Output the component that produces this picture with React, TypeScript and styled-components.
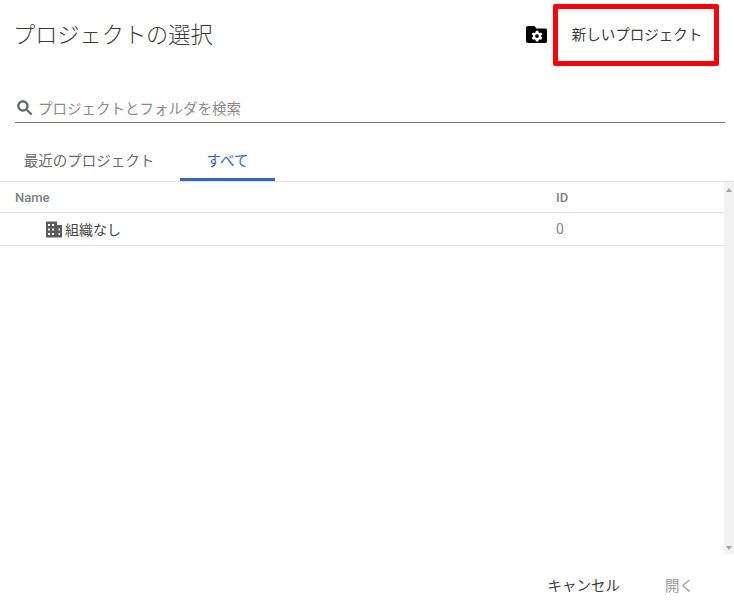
import React from "react";
import styled, { createGlobalStyle } from "styled-components";

const FONT = `Roboto, "Noto Sans CJK JP", "Liberation Sans", sans-serif`;

const Global = createGlobalStyle`
  html, body { margin: 0; padding: 0; background: #fff; }
  body { font-family: ${FONT}; overflow: hidden; }
`;

const Dialog = styled.div`
  width: 734px;
  height: 612px;
  display: flex;
  flex-direction: column;
  background: #fff;
  overflow: hidden;
`;

const Header = styled.header`
  height: 68px;
  padding: 4px 15px 2px 13px;
  box-sizing: border-box;
  display: flex;
  align-items: center;
`;

const Title = styled.h1`
  margin: 0;
  flex: 1;
  font-size: 22.2px;
  font-weight: 300;
  color: #3c3c3c;
  line-height: 30px;
`;

const FolderButton = styled.button`
  border: 0;
  padding: 0;
  background: none;
  width: 24px;
  height: 24px;
  margin: 0 4px 2px 0;
  display: flex;
`;

const HighlightedAction = styled.button`
  width: 166px;
  height: 62px;
  margin: 0 0 0 1px;
  border: 5px solid #fa0008;
  border-radius: 2px;
  box-sizing: border-box;
  background: #fff;
  font-family: inherit;
  font-size: 14.5px;
  font-weight: 400;
  color: #3a3a3a;
  padding: 0 0 4px 2px;
`;

const SearchField = styled.div`
  margin: 20px 9px 0 15px;
  height: 35px;
  box-sizing: border-box;
  border-bottom: 1px solid #757575;
  display: flex;
  align-items: center;
  gap: 3px;
  padding: 5px 0 0 0;
  font-size: 14.5px;
  color: #8a8a8a;
`;

const Tabs = styled.nav`
  margin-top: 20px;
  height: 39px;
  box-sizing: border-box;
  display: flex;
  border-bottom: 1px solid #e0e0e0;
`;

const Tab = styled.div<{ $active?: boolean; $width: number }>`
  width: ${(p) => p.$width}px;
  height: 38px;
  box-sizing: border-box;
  display: flex;
  align-items: center;
  justify-content: center;
  padding: 0 ${(p) => (p.$active ? 0 : 2)}px 3px 0;
  font-size: 14.5px;
  color: ${(p) => (p.$active ? "#3367b0" : "#6b6b6b")};
  border-bottom: 3px solid ${(p) => (p.$active ? "#3367c0" : "transparent")};
`;

const TableArea = styled.div`
  flex: 0 0 372px;
  display: flex;
`;

const Table = styled.div`
  flex: 1;
`;

const Row = styled.div<{ $height: number }>`
  height: ${(p) => p.$height}px;
  box-sizing: border-box;
  display: grid;
  grid-template-columns: 556px 1fr;
  align-items: center;
  border-bottom: 1px solid #e0e0e0;
`;

const HeadCell = styled.div`
  font-size: 13px;
  font-weight: 500;
  color: #808080;
  padding-top: 1px;
  &:first-child { padding-left: 15px; }
`;

const OrgCell = styled.div`
  padding-left: 46px;
  display: flex;
  align-items: center;
  gap: 3px;
  font-size: 14px;
  color: #444;
`;

const IdCell = styled.div`
  font-size: 14px;
  color: #858585;
`;

const ScrollTrack = styled.div`
  width: 10px;
  background: #f1f1f1;
  display: flex;
  flex-direction: column;
  justify-content: space-between;
  align-items: center;
  padding: 6px 0 4px;
  box-sizing: border-box;
`;

const ScrollArrow = styled.span<{ $down?: boolean }>`
  width: 0;
  height: 0;
  border-left: 3px solid transparent;
  border-right: 3px solid transparent;
  ${(p) => (p.$down ? "border-top: 4px solid #a3a3a3;" : "border-bottom: 4px solid #a3a3a3;")}
`;

const Footer = styled.footer`
  display: flex;
  justify-content: flex-end;
  align-items: center;
  gap: 45px;
  padding: 20px 40px 0 0;
`;

const FooterAction = styled.button<{ $disabled?: boolean }>`
  border: 0;
  padding: 0;
  background: none;
  font-family: inherit;
  font-size: 14.5px;
  color: ${(p) => (p.$disabled ? "#9a9a9a" : "#3c3c3c")};
`;

export default function App() {
  return (
    <Dialog>
      <Global />
      <Header>
        <Title>プロジェクトの選択</Title>
        <FolderButton aria-label="フォルダの管理">
          <svg width="24" height="24" viewBox="0 0 24 24" aria-hidden="true">
            <path
              fill="#000"
              d="M4 4h6.500L12.500 6.500h8.800c1.100 0 1.700.8 1.700 1.800v11c0 .9-.6 1.700-1.700 1.700H4c-1.100 0-2-.8-2-1.700V5.800C2 4.800 2.900 4 4 4z"
            />
            <path
              fill="#fff"
              d="M17.100 13.500l1.300-1-1.200-2.100-1.500.6a4.500 4.500 0 0 0-1.100-.6L14.300 8.800h-2.500l-.3 1.600a4.500 4.500 0 0 0-1.100.6l-1.500-.6-1.200 2.100 1.300 1a4.500 4.500 0 0 0 0 1.200l-1.300 1 1.200 2.100 1.500-.6c.3.3.7.500 1.100.6l.3 1.600h2.500l.3-1.600c.4-.1.800-.3 1.100-.6l1.500.6 1.200-2.100-1.300-1a4.500 4.500 0 0 0 0-1.200zM13 16a1.900 1.900 0 1 1 0-3.800 1.900 1.900 0 0 1 0 3.800z"
            />
          </svg>
        </FolderButton>
        <HighlightedAction>新しいプロジェクト</HighlightedAction>
      </Header>

      <SearchField>
        <svg width="20" height="20" viewBox="0 0 24 24" aria-hidden="true">
          <path
            fill="#5f6368"
            stroke="#5f6368"
            strokeWidth="0.8"
            d="M15.500 14h-.79l-.28-.27A6.470 6.470 0 0 0 16 9.500 6.500 6.500 0 1 0 9.500 16c1.610 0 3.090-.59 4.230-1.570l.27.28v.79l5 4.990L20.490 19l-4.990-5zm-6 0C7.010 14 5 11.990 5 9.500S7.010 5 9.500 5 14 7.010 14 9.500 11.990 14 9.500 14z"
          />
        </svg>
        プロジェクトとフォルダを検索
      </SearchField>

      <Tabs>
        <Tab $width={180}>最近のプロジェクト</Tab>
        <Tab $width={95} $active>
          すべて
        </Tab>
      </Tabs>

      <TableArea>
        <Table>
          <Row $height={31}>
            <HeadCell>Name</HeadCell>
            <HeadCell>ID</HeadCell>
          </Row>
          <Row $height={33}>
            <OrgCell>
              <svg width="16" height="17" viewBox="0 0 16 17" aria-hidden="true">
                <path
                  fill="#5a5a5a"
                  fillRule="evenodd"
                  d="M0 0.500h11v3.500h5v12.500H0V0.500zm2 2.500v2h2V3H2zm4 0v2h2V3H6zM2 7.500v2h2v-2H2zm4 0v2h2v-2H6zm6.500 0v2H14v-2h-1.500zM2 12v2h2v-2H2zm4 0v2h2v-2H6zm6.500 0v2H14v-2h-1.500z"
                />
              </svg>
              組織なし
            </OrgCell>
            <IdCell>0</IdCell>
          </Row>
        </Table>
        <ScrollTrack>
          <ScrollArrow />
          <ScrollArrow $down />
        </ScrollTrack>
      </TableArea>

      <Footer>
        <FooterAction>キャンセル</FooterAction>
        <FooterAction $disabled>開く</FooterAction>
      </Footer>
    </Dialog>
  );
}
